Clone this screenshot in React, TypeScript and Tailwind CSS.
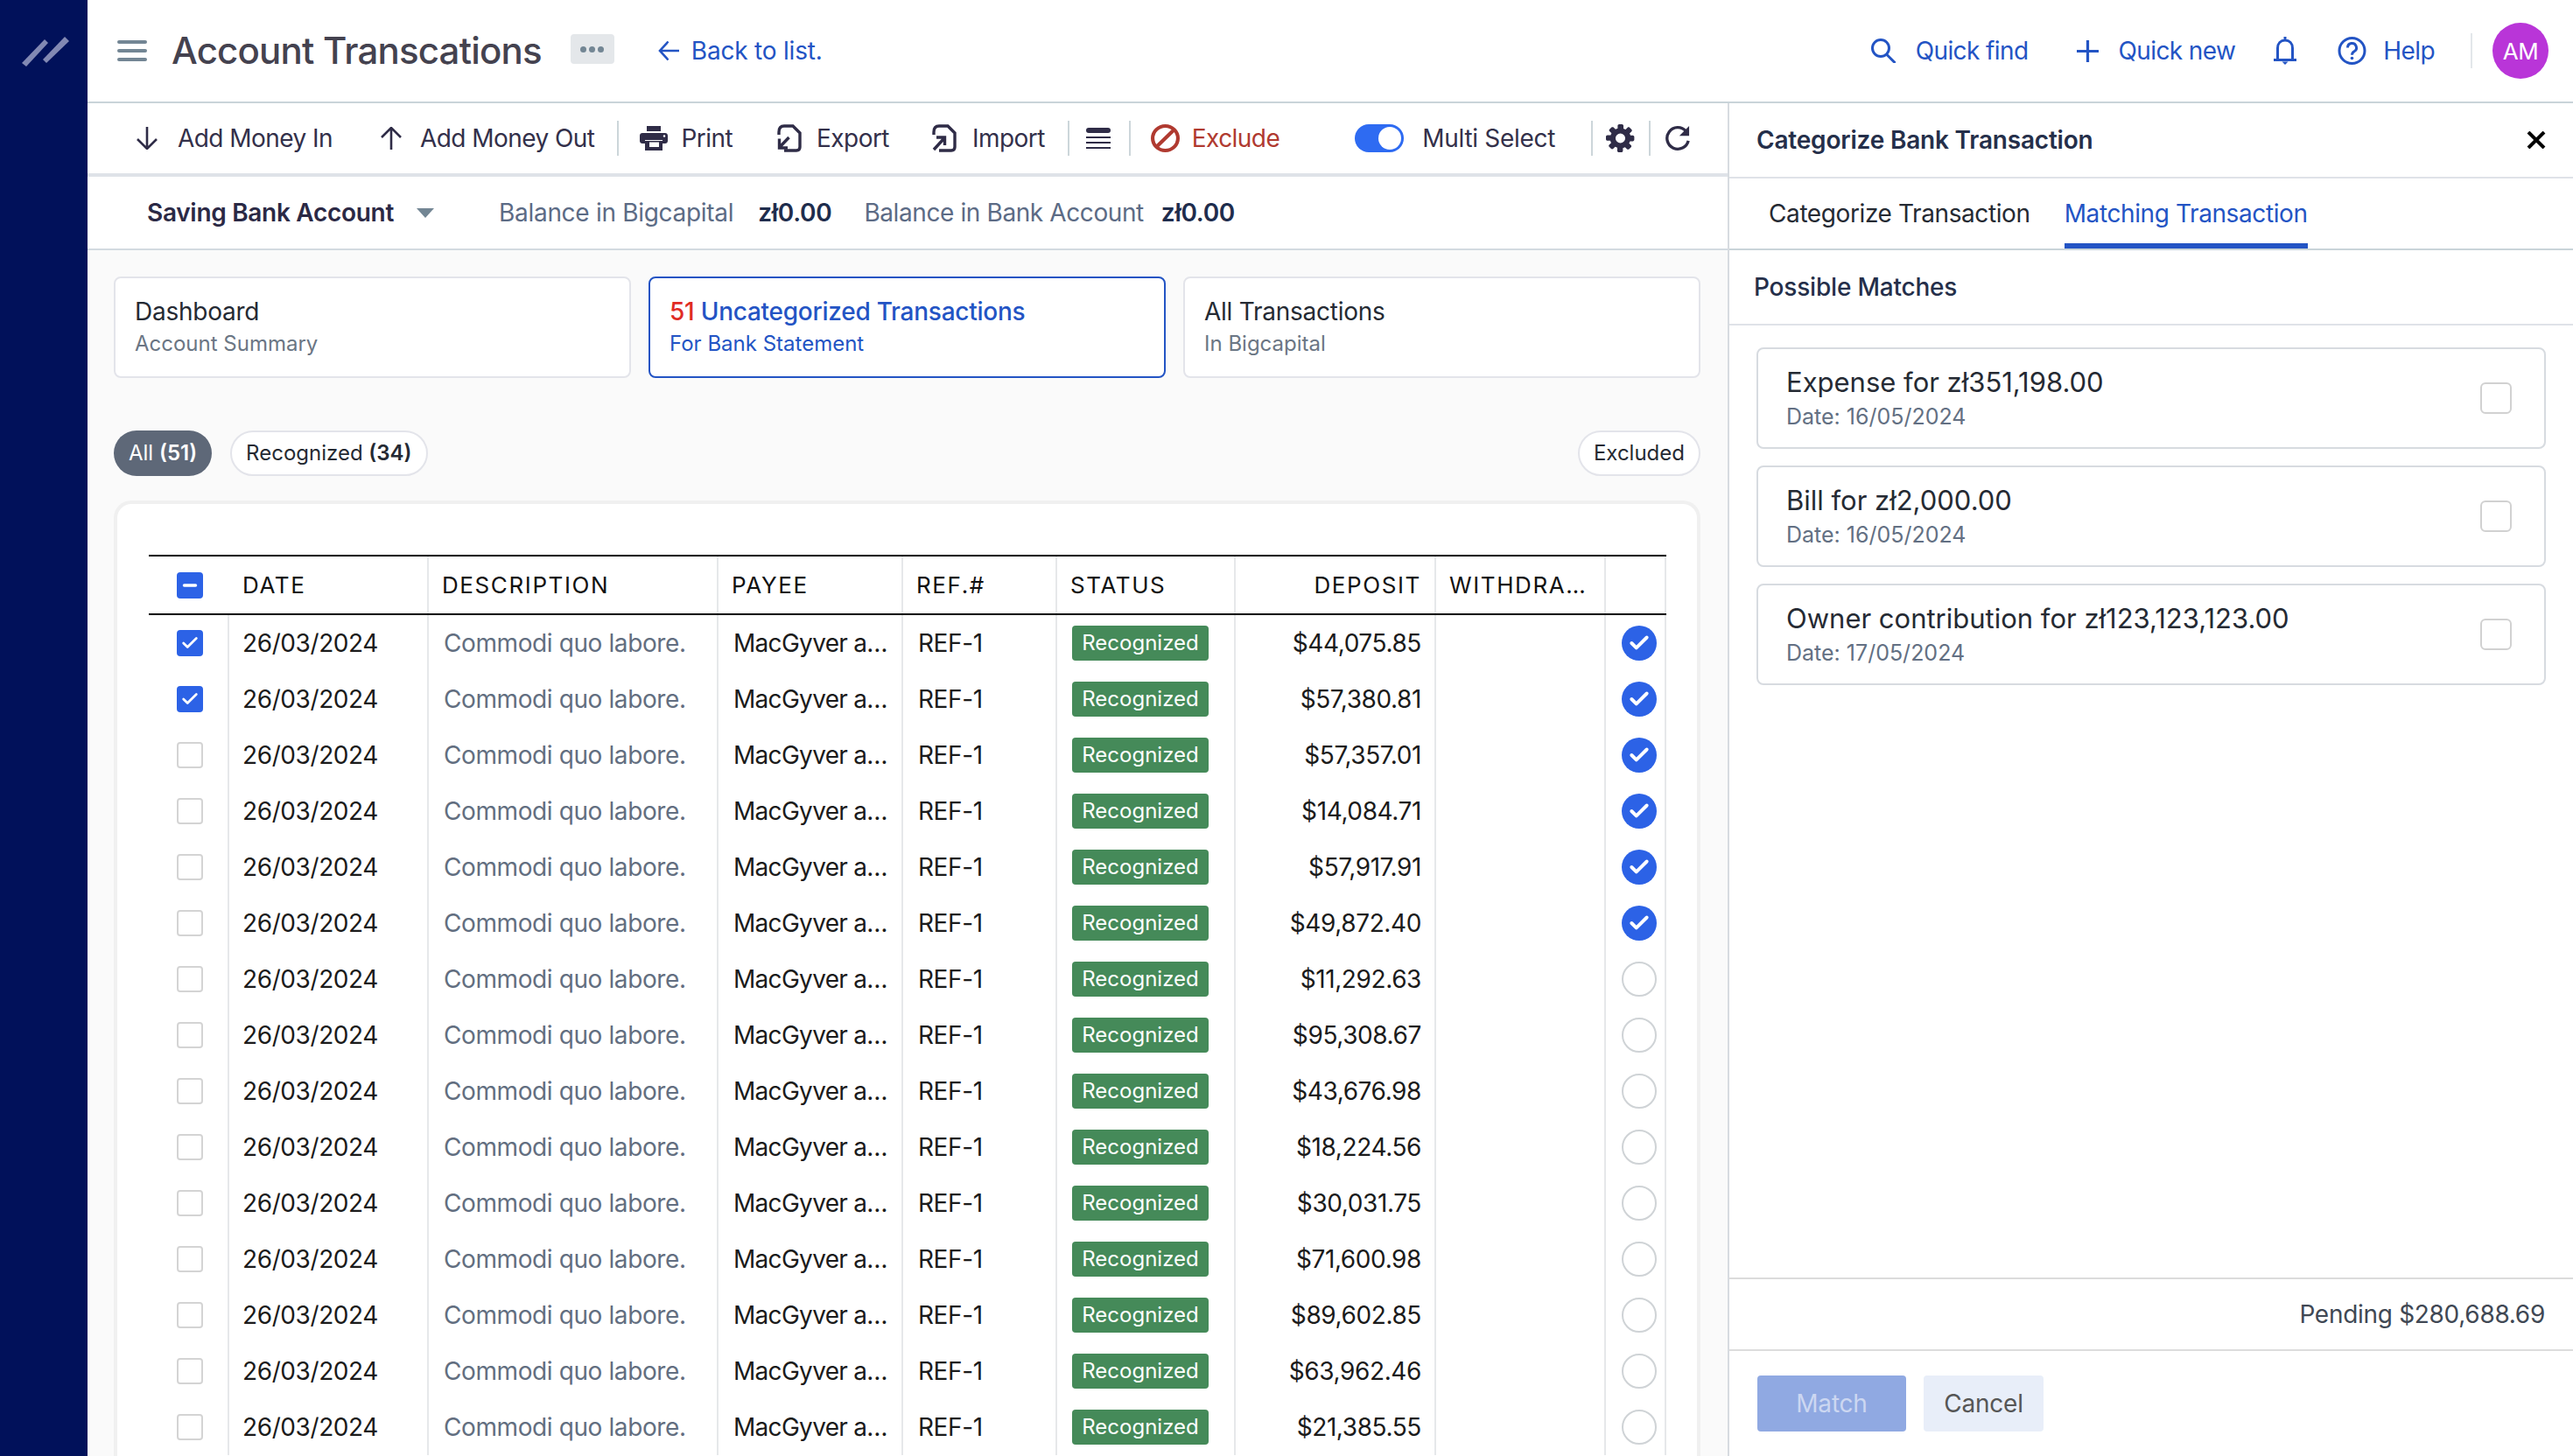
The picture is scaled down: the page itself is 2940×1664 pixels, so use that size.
import { Check, Minus } from 'lucide-react';

const deposits = [
  '$44,075.85', '$57,380.81', '$57,357.01', '$14,084.71', '$57,917.91',
  '$49,872.40', '$11,292.63', '$95,308.67', '$43,676.98', '$18,224.56',
  '$30,031.75', '$71,600.98', '$89,602.85', '$63,962.46', '$21,385.55',
];

const matches = [
  { title: 'Expense for zł351,198.00', date: 'Date: 16/05/2024' },
  { title: 'Bill for zł2,000.00', date: 'Date: 16/05/2024' },
  { title: 'Owner contribution for zł123,123,123.00', date: 'Date: 17/05/2024' },
];

const gridCols = 'grid grid-cols-[92px_228px_331px_211px_176px_204px_229px_194px_69px]';

function Divider() {
  return <div className="w-0.5 h-10 shrink-0 bg-[#ccd6da]" />;
}

function ArrowV({ up }: { up?: boolean }) {
  return (
    <svg width="26" height="26" viewBox="0 0 26 26" fill="none" stroke="#2f2c47" strokeWidth="2.6" className={up ? 'rotate-180' : ''}>
      <path d="M13 0v25M2 14l11 11 11-11" />
    </svg>
  );
}

function PrintIcon() {
  return (
    <svg width="32" height="28" viewBox="0 0 32 28" fill="#2f2c47">
      <path d="M8 0h16v6H8z" />
      <path d="M3 8h26c1.7 0 3 1.3 3 3v6c0 1.7-1.3 3-3 3h-3v-4H6v4H3c-1.7 0-3-1.3-3-3v-6c0-1.700 1.300-3 3-3z" />
      <path fillRule="evenodd" d="M6 17h20v11H6zM11 18.500V24h11v-5.500z" />
      <circle cx="28" cy="11.500" r="1.200" fill="#fff" />
    </svg>
  );
}

function FileArrowIcon({ importing }: { importing?: boolean }) {
  return (
    <svg width="28" height="32" viewBox="0 0 28 32" fill="none" stroke="#2f2c47" strokeWidth="3.4">
      <path d="M2 12V9q0-7 6-7h10l8 8v16q0 4-4 4H8" />
      {importing ? (
        <path d="M2 29l11-12M5 15h9.500v9" />
      ) : (
        <path d="M13.500 15L3 26M2.500 16.500V27H12" />
      )}
    </svg>
  );
}

function CogIcon() {
  return (
    <svg width="33" height="32" viewBox="0 0 16 16" fill="#2f2c47" preserveAspectRatio="none">
      <path
        fillRule="evenodd"
        d="M15.200 6.400h-1.600c-.1-.4-.3-.8-.5-1.200l1.100-1.100c.3-.3.3-.8 0-1.100l-1.100-1.100c-.3-.3-.8-.3-1.100 0l-1.100 1.100c-.4-.2-.8-.4-1.200-.5V.8c0-.4-.4-.8-.8-.8H7.300c-.4 0-.8.4-.8.8v1.600c-.4.1-.8.3-1.200.5L4.200 1.800c-.3-.3-.8-.3-1.100 0L2 2.900c-.3.3-.3.8 0 1.100l1.100 1.100c-.2.4-.4.8-.5 1.200H.8c-.4 0-.8.4-.8.8v1.500c0 .4.4.8.8.8h1.600c.1.4.3.8.5 1.200L1.800 11.800c-.3.3-.3.8 0 1.100l1.100 1.100c.3.3.8.3 1.100 0l1.100-1.100c.4.2.8.4 1.200.5v1.800c0 .4.4.8.8.8h1.500c.4 0 .8-.4.8-.8v-1.600c.4-.1.8-.3 1.200-.5l1.100 1.100c.3.3.8.3 1.100 0l1.100-1.100c.3-.3.3-.8 0-1.100l-1.100-1.100c.2-.4.4-.8.5-1.200h1.600c.4 0 .8-.4.8-.8V7.200c0-.4-.4-.8-.8-.8zM8 10.700a2.700 2.700 0 110-5.400 2.700 2.700 0 010 5.400z"
      />
    </svg>
  );
}

function RefreshIcon() {
  return (
    <svg width="28" height="30" viewBox="0 0 15 16" fill="none" stroke="#2f2c47" strokeWidth="1.800">
      <path d="M12.500 3.600A6.600 6.600 0 1014 9.500" />
      <path d="M14.500.5v6h-6z" fill="#2f2c47" stroke="none" />
    </svg>
  );
}

function TopBar() {
  return (
    <div className="h-[118px] shrink-0 flex items-center pl-[34px] pr-[28px] border-b-2 border-[#c9d4d9]">
      <div className="w-[34px] flex flex-col gap-[6px]">
        <span className="h-1 rounded-full bg-[#738694]" />
        <span className="h-1 rounded-full bg-[#738694]" />
        <span className="h-1 rounded-full bg-[#738694]" />
      </div>
      <h1 className="ml-[28px] text-[42px] font-medium leading-none tracking-[-0.8px] text-[#44424f] whitespace-nowrap">Account Transcations</h1>
      <div className="ml-[33px] mb-1 w-[50px] h-[34px] rounded bg-[#e4e7ea] flex items-center justify-center gap-[3px]">
        <span className="w-[7px] h-[7px] rounded-full bg-[#738694]" />
        <span className="w-[7px] h-[7px] rounded-full bg-[#738694]" />
        <span className="w-[7px] h-[7px] rounded-full bg-[#738694]" />
      </div>
      <div className="ml-[50px] flex items-center gap-[14px] text-[#2354c4] text-[28px] tracking-[-0.2px]">
        <svg width="24" height="24" viewBox="0 0 24 24" fill="none" stroke="#2354c4" strokeWidth="2.600">
          <path d="M24 12H2M11.500 1.500L2 12l9.500 10.500" />
        </svg>
        <span>Back to list.</span>
      </div>
      <div className="ml-auto flex items-center text-[#2354c4] text-[28px] tracking-[-0.6px]">
        <svg width="29" height="28" viewBox="0 0 29 28" fill="none" stroke="#2354c4" strokeWidth="3">
          <circle cx="11" cy="11" r="9.500" />
          <path d="M17.500 18L27.500 28" />
        </svg>
        <span className="ml-[22px]">Quick find</span>
        <svg className="ml-[56px]" width="25" height="25" viewBox="0 0 25 25" fill="none" stroke="#2354c4" strokeWidth="3.200">
          <path d="M12.500 0v25M0 12.500h25" />
        </svg>
        <span className="ml-[22px]">Quick new</span>
        <svg className="ml-[43px]" width="28" height="32" viewBox="0 0 28 32" fill="none" stroke="#2354c4" strokeWidth="3">
          <path d="M14 0v4M5.500 26V13C5.500 7.500 9 4 14 4s8.500 3.500 8.500 9v13" />
          <path d="M1 26.500h26" />
          <path d="M10.500 28.500h7L14 32z" fill="#2354c4" stroke="none" />
        </svg>
        <svg className="ml-[46px]" width="33" height="32" viewBox="0 0 33 32" fill="none" stroke="#2354c4" strokeWidth="3">
          <circle cx="16.500" cy="16" r="14.500" />
          <path d="M11.500 12.500a5 5 0 117.500 4.300c-1.700 1-2.500 2-2.500 4" />
          <circle cx="16.500" cy="24.500" r="1.800" fill="#2354c4" stroke="none" />
        </svg>
        <span className="ml-[19px]">Help</span>
        <div className="ml-[41px] w-0.5 h-10 bg-[#e3e7ea]" />
        <div className="ml-[23px] w-16 h-16 rounded-full bg-[#b935d8] text-white text-[26px] tracking-[-0.5px] flex items-center justify-center">AM</div>
      </div>
    </div>
  );
}

function Toolbar() {
  return (
    <div className="h-[84px] shrink-0 flex items-center pl-[55px] border-b-4 border-[#dfe2e8] text-[28px] tracking-[-0.55px] text-[#33304a] whitespace-nowrap">
      <ArrowV />
      <span className="ml-[22px]">Add Money In</span>
      <div className="ml-[54px]"><ArrowV up /></div>
      <span className="ml-[20px]">Add Money Out</span>
      <div className="ml-[26px]"><Divider /></div>
      <div className="ml-[24px]"><PrintIcon /></div>
      <span className="ml-[15px]">Print</span>
      <div className="ml-[51px]"><FileArrowIcon /></div>
      <span className="ml-[17px]">Export</span>
      <div className="ml-[49px]"><FileArrowIcon importing /></div>
      <span className="ml-[18px]">Import</span>
      <div className="ml-[26px]"><Divider /></div>
      <div className="ml-[19px] w-7 flex flex-col gap-1">
        <span className="h-[6px] bg-[#2f2c47] rounded-sm" />
        <span className="h-0.5 bg-[#2f2c47]" />
        <span className="h-0.5 bg-[#2f2c47]" />
        <span className="h-0.5 bg-[#2f2c47]" />
      </div>
      <div className="ml-[21px]"><Divider /></div>
      <svg className="ml-[23px]" width="33" height="32" viewBox="0 0 32 32" fill="none" stroke="#b03a30" strokeWidth="4" preserveAspectRatio="none">
        <circle cx="16" cy="16" r="14" />
        <path d="M26 6L6 26" />
      </svg>
      <span className="ml-[14px] text-[#b03a30]">Exclude</span>
      <div className="ml-[86px] w-14 h-8 rounded-full bg-[#2e6bf2] p-[3px] flex justify-end">
        <span className="w-[26px] h-[26px] rounded-full bg-white" />
      </div>
      <span className="ml-[21px] tracking-[-0.3px]">Multi Select</span>
      <div className="ml-[41px]"><Divider /></div>
      <div className="ml-[15px]"><CogIcon /></div>
      <div className="ml-[16px]"><Divider /></div>
      <div className="ml-[17px]"><RefreshIcon /></div>
    </div>
  );
}

function AccountBar() {
  return (
    <div className="h-[84px] shrink-0 flex items-center pl-[68px] border-b-2 border-[#d3dae0] text-[28px] tracking-[-0.3px] whitespace-nowrap">
      <span className="font-semibold text-[#2b2945]">Saving Bank Account</span>
      <span className="ml-[26px] w-0 h-0 border-x-[10px] border-x-transparent border-t-[11px] border-t-[#738694]" />
      <span className="ml-[74px] text-[#5c6b85]">Balance in Bigcapital</span>
      <span className="ml-[28px] font-semibold text-[#1f2d4d]">zł0.00</span>
      <span className="ml-[37px] text-[#5c6b85] tracking-[-0.4px]">Balance in Bank Account</span>
      <span className="ml-[20px] font-semibold text-[#1f2d4d]">zł0.00</span>
    </div>
  );
}

function TabCard({ title, sub, active, count }: { title: string; sub: string; active?: boolean; count?: string }) {
  return (
    <div className={`flex-1 h-[116px] rounded-lg bg-white border-2 px-[22px] pb-[2px] flex flex-col justify-center gap-[2px] ${active ? 'border-[#2354c4]' : 'border-[#e3e4ea]'}`}>
      <div className={`text-[28px] leading-[38px] tracking-[-0.25px] ${active ? 'text-[#2354c4] font-medium' : 'text-[#252a33]'}`}>
        {count && <span className="text-[#e02b24]">{count} </span>}
        {title}
      </div>
      <div className={`text-[24px] leading-[32px] ${active ? 'text-[#2354c4]' : 'text-[#6b7684]'}`}>{sub}</div>
    </div>
  );
}

function Pill({ children, active }: { children: React.ReactNode; active?: boolean }) {
  return (
    <div className={`h-[52px] rounded-full flex items-center text-[24px] ${active ? 'px-[17px] bg-[#5e6878] text-white' : 'px-[16px] bg-white border-2 border-[#e3e4ea] text-[#252a33]'}`}>
      {children}
    </div>
  );
}

function HeaderCell({ children, right }: { children?: React.ReactNode; right?: boolean }) {
  return (
    <div className={`h-full flex items-center pl-[15px] pr-[15px] text-[26px] tracking-[1.6px] text-[#111] whitespace-nowrap border-r-2 border-[#e6e8ea] ${right ? 'justify-end' : ''}`}>
      {children}
    </div>
  );
}

function Row({ amount, index }: { amount: string; index: number }) {
  const checked = index < 2;
  const matched = index < 6;
  const cell = 'h-16 flex items-center border-r-2 border-[#e6e8ea] pl-[17px] pr-[15px] text-[28px] tracking-[-0.4px] whitespace-nowrap';
  return (
    <div className={gridCols}>
      <div className="h-16 border-r-2 border-[#e6e8ea] flex items-center pl-[32px]">
        {checked ? (
          <span className="w-[30px] h-[30px] rounded-[4px] bg-[#2c62e6] flex items-center justify-center">
            <Check className="w-[22px] h-[22px] text-white" strokeWidth={3} />
          </span>
        ) : (
          <span className="w-[30px] h-[30px] rounded-[4px] border-2 border-[#d4d4d4] bg-white" />
        )}
      </div>
      <div className={`${cell} !pl-[15px] text-[#1b1b1b]`}>26/03/2024</div>
      <div className={`${cell} text-[#626e80]`}>Commodi quo labore.</div>
      <div className={`${cell} text-[#1b1b1b] tracking-[-0.7px]`}>MacGyver a…</div>
      <div className={`${cell} text-[#1b1b1b]`}>REF-1</div>
      <div className={cell}>
        <span className="w-[156px] h-10 rounded bg-[#458a59] text-white text-[24px] tracking-normal flex items-center justify-center">Recognized</span>
      </div>
      <div className={`${cell} justify-end text-[#1b1b1b]`}>{amount}</div>
      <div className={cell} />
      <div className="h-16 border-r-2 border-[#e6e8ea] flex items-center pl-[18px]">
        {matched ? (
          <span className="w-10 h-10 rounded-full bg-[#2c62e6] flex items-center justify-center">
            <Check className="w-[26px] h-[26px] text-white" strokeWidth={3.6} />
          </span>
        ) : (
          <span className="w-10 h-10 rounded-full border-2 border-[#cfd3d6] bg-white" />
        )}
      </div>
    </div>
  );
}

function MatchCard({ title, date }: { title: string; date: string }) {
  return (
    <div className="h-[116px] rounded-lg border-2 border-[#d7dbe0] pl-[32px] pr-[37px] flex items-center justify-between">
      <div>
        <div className="text-[31px] leading-[42px] text-[#252a33]">{title}</div>
        <div className="text-[25px] leading-[36px] text-[#637083]">{date}</div>
      </div>
      <span className="w-9 h-9 rounded-[6px] border-2 border-[#d1d1d1] bg-white" />
    </div>
  );
}

function SidePanel() {
  return (
    <div className="w-[966px] shrink-0 h-full flex flex-col border-l-2 border-[#d7dbe0] bg-white whitespace-nowrap">
      <div className="h-[86px] shrink-0 border-b-2 border-[#dfe2e8] flex items-center justify-between pl-[31px] pr-[31px]">
        <span className="text-[28px] font-semibold tracking-[-0.2px] text-[#252f4a]">Categorize Bank Transaction</span>
        <svg width="22" height="20" viewBox="0 0 22 20" fill="none" stroke="#000" strokeWidth="4">
          <path d="M2 1l18 18M20 1L2 19" />
        </svg>
      </div>
      <div className="h-[82px] shrink-0 border-b-2 border-[#c9d4d9] flex pl-[45px] text-[28px] tracking-[-0.4px]">
        <div className="flex items-center text-[#252a33]">Categorize Transaction</div>
        <div className="w-[278px] ml-[39px] flex items-center justify-center border-b-[6px] border-[#2354c4] pt-[6px] text-[#2354c4]">Matching Transaction</div>
      </div>
      <div className="h-[86px] shrink-0 border-b-2 border-[#dfe2e8] flex items-center pl-[28px] text-[28px] tracking-[-0.2px] font-medium text-[#252f4a]">Possible Matches</div>
      <div className="flex-1 px-[31px] pt-[25px] flex flex-col gap-[19px]">
        {matches.map((m) => (
          <MatchCard key={m.title} title={m.title} date={m.date} />
        ))}
      </div>
      <div className="h-[84px] shrink-0 border-y-2 border-[#dcdcdc] flex items-center justify-end pr-[32px] text-[28px] tracking-[-0.3px] text-[#404854]">Pending $280,688.69</div>
      <div className="h-[120px] shrink-0 pl-[32px] pt-[28px] flex gap-[20px] text-[28px] tracking-[-0.2px]">
        <div className="w-[170px] h-16 rounded bg-[#90a9e2] text-[#ccd7f1] flex items-center justify-center">Match</div>
        <div className="w-[137px] h-16 rounded bg-[#e8eef9] text-[#565656] flex items-center justify-center">Cancel</div>
      </div>
    </div>
  );
}

export default function App() {
  return (
    <div className="w-[2940px] h-[1664px] overflow-hidden flex bg-white font-['Inter',sans-serif]">
      <aside className="w-[100px] shrink-0 bg-[#01115a] pt-[42px] pl-[25px]">
        <svg width="54" height="34" viewBox="0 0 54 34" fill="#8289b3">
          <path d="M0 30L26 3l4 4L5 34z" />
          <path d="M24 26L49 0l5 5-26 25z" />
        </svg>
      </aside>
      <div className="flex-1 min-w-0 h-full flex flex-col">
        <TopBar />
        <div className="flex-1 min-h-0 flex">
          <div className="flex-1 min-w-0 flex flex-col">
            <Toolbar />
            <AccountBar />
            <div className="flex-1 min-h-0 bg-[#fafafa] pt-[30px] pl-[30px] pr-[31px]">
              <div className="flex gap-[20px]">
                <TabCard title="Dashboard" sub="Account Summary" />
                <TabCard active count="51" title="Uncategorized Transactions" sub="For Bank Statement" />
                <TabCard title="All Transactions" sub="In Bigcapital" />
              </div>
              <div className="mt-[60px] flex items-center gap-[21px]">
                <Pill active>All&nbsp;<b className="font-semibold">(51)</b></Pill>
                <Pill>Recognized&nbsp;<b className="font-semibold">(34)</b></Pill>
                <div className="ml-auto"><Pill>Excluded</Pill></div>
              </div>
              <div className="mt-[28px] rounded-t-[20px] border-4 border-b-0 border-[#f0f0f0] bg-white pt-[58px] pl-[36px] pr-[35px] h-[1100px]">
                <div className={`${gridCols} h-[69px] border-y-2 border-black items-center`}>
                  <div className="h-full flex items-center pl-[32px]">
                    <span className="w-[30px] h-[30px] rounded-[4px] bg-[#2c62e6] flex items-center justify-center">
                      <Minus className="w-[22px] h-[22px] text-white" strokeWidth={4} />
                    </span>
                  </div>
                  <HeaderCell>DATE</HeaderCell>
                  <HeaderCell>DESCRIPTION</HeaderCell>
                  <HeaderCell>PAYEE</HeaderCell>
                  <HeaderCell>REF.#</HeaderCell>
                  <HeaderCell>STATUS</HeaderCell>
                  <HeaderCell right>DEPOSIT</HeaderCell>
                  <HeaderCell>WITHDRA…</HeaderCell>
                  <HeaderCell />
                </div>
                {deposits.map((amount, i) => (
                  <Row key={i} amount={amount} index={i} />
                ))}
              </div>
            </div>
          </div>
          <SidePanel />
        </div>
      </div>
    </div>
  );
}
